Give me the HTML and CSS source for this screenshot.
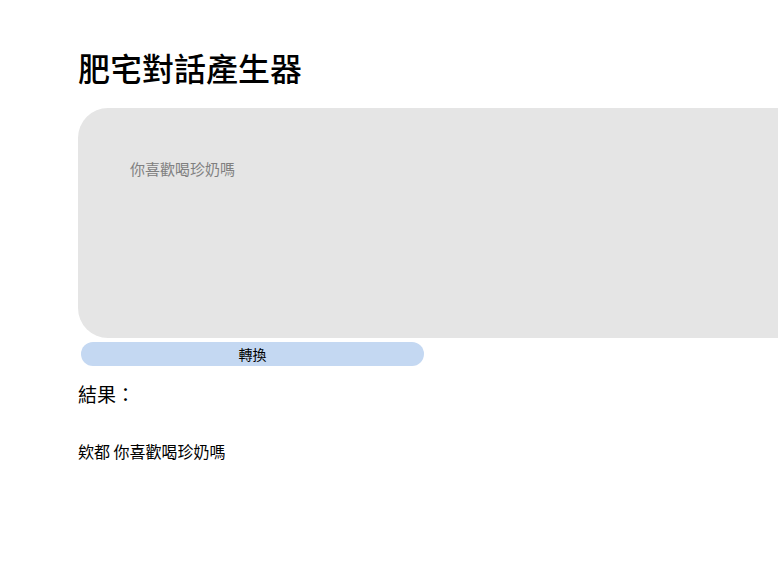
FILE: index.html
```html
<!DOCTYPE html>
<html lang="zh-Hant">
<head>
  <meta charset="UTF-8" />
  <meta name="viewport" content="width=device-width, initial-scale=1.0" />
  <title>肥宅對話產生器</title>
  <link rel="stylesheet" href="styles.css">
</head>
<body>
  <div class="page">
    <h1 class="title">肥宅對話產生器</h1>
    <textarea id="input" class="input-box" placeholder="你喜歡喝珍奶嗎"></textarea>
    <button class="convert-btn" onclick="convert()">轉換</button>
    <h3 class="result-title">結果：</h3>
    <div id="output" class="result">欸都 你喜歡喝珍奶嗎</div>
  </div>

  <script>
    function convert() {
      const text = document.getElementById("input").value || "你喜歡喝珍奶嗎";
      document.getElementById("output").textContent = "欸都 " + text;
    }
  </script>
</body>
</html>
```

FILE: styles.css
```css
html, body {
  margin: 0;
  padding: 0;
  background: #ffffff;
  color: #000000;
  font-family: "Noto Sans CJK TC", "Noto Sans", sans-serif;
  overflow-x: hidden;
}

.page {
  padding: 0 0 40px 78px;
}

.title {
  font-size: 32px;
  line-height: 40px;
  font-weight: 500;
  margin: 47px 0 21px 0;
}

/* box runs off the right edge in the original, so only the left corners are round */
.input-box {
  display: block;
  box-sizing: border-box;
  width: 700px;
  height: 230px;
  margin: 0;
  padding: 51px 52px;
  border: none;
  border-radius: 30px 0 0 30px;
  background: #e5e5e5;
  font-family: inherit;
  font-size: 15px;
  line-height: 20px;
  color: #333;
  resize: none;
  outline: none;
}

.input-box::placeholder {
  color: #808080;
}

.convert-btn {
  display: block;
  width: 343px;
  height: 24px;
  margin: 4px 0 0 3px;
  padding: 0;
  border: none;
  border-radius: 12px;
  background: #c4d8f2;
  color: #000;
  font-family: inherit;
  font-size: 14px;
  line-height: 24px;
  cursor: pointer;
}

.result-title {
  font-size: 19px;
  line-height: 24px;
  font-weight: 400;
  margin: 16px 0 34px 0;
}

.result {
  font-size: 16px;
  line-height: 22px;
}
```
